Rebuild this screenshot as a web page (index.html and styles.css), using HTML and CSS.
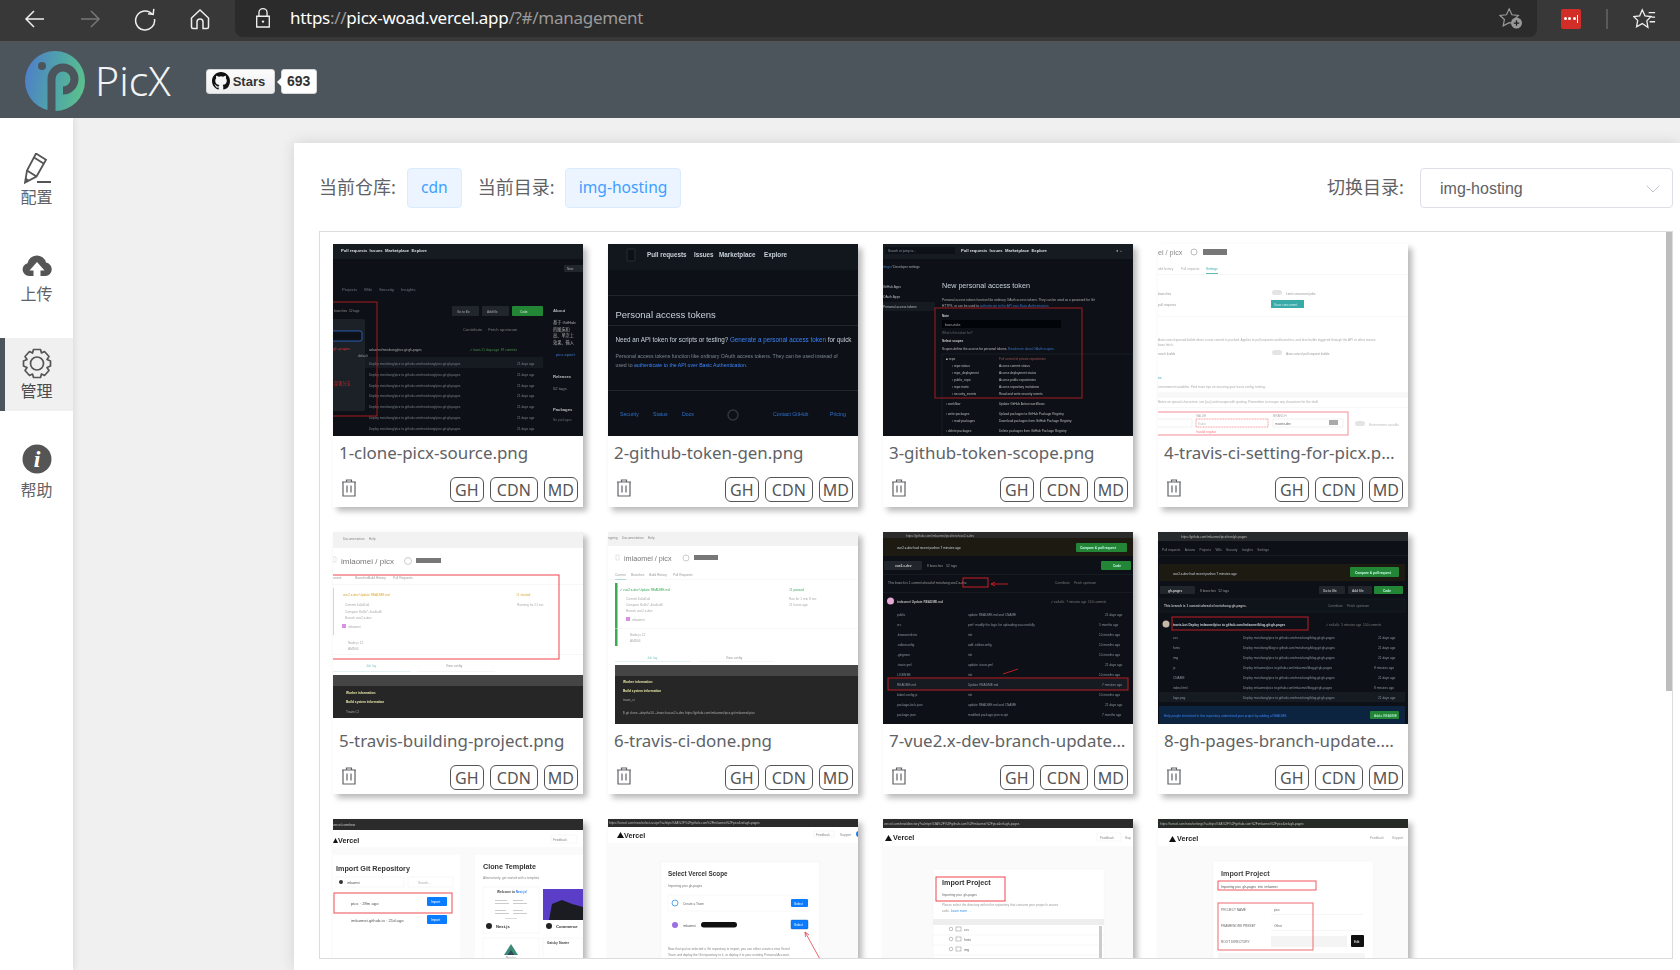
FILE: index.html
```html
<!DOCTYPE html>
<html lang="zh">
<head>
<meta charset="utf-8">
<title>PicX</title>
<link rel="stylesheet" href="styles.css">
</head>
<body>
<div class="browser">
  <div class="nav-icons">
    <svg class="bi" viewBox="0 0 24 24"><path d="M21 12H3.500M11 4l-8 8 8 8" fill="none" stroke="#eee" stroke-width="1.500"/></svg>
    <svg class="bi" viewBox="0 0 24 24"><path d="M3 12h17.500M13 4l8 8-8 8" fill="none" stroke="#777" stroke-width="1.500"/></svg>
    <svg class="bi" viewBox="0 0 24 24"><path d="M19.500 7.500A9.500 9.500 0 1 0 21.500 12M15 6.800l5.200.6.6-5.600" fill="none" stroke="#eee" stroke-width="1.500"/></svg>
    <svg class="bi" viewBox="0 0 24 24"><path d="M3.500 11L12 3l8.500 8v9a1.500 1.500 0 0 1-1.500 1.500h-4V15a3 3 0 0 0-6 0v6.500H5A1.500 1.500 0 0 1 3.500 20z" fill="none" stroke="#eee" stroke-width="1.500"/></svg>
  </div>
  <div class="address">
    <svg class="lock" viewBox="0 0 20 24"><path d="M5.500 10V6a4.500 4.500 0 0 1 9 0v4M3 10h14v12H3z" fill="none" stroke="#eee" stroke-width="1.500"/><circle cx="10" cy="16" r="1.300" fill="#eee"/></svg>
    <span class="url"><span class="hi">https</span>://<span class="hi">picx-woad.vercel.app</span>/?#/management</span>
    <svg class="star-add" viewBox="0 0 26 24"><path d="M11 2l3 6.500 7 .8-5 4.800 1 4-6-1-6.500 3.500 1.300-7L1 9.300l7-.8z" fill="none" stroke="#999" stroke-width="1.300"/><circle cx="19" cy="17.500" r="6" fill="#999"/><path d="M19 14.500v6M16 17.500h6" stroke="#222" stroke-width="1.400"/></svg>
  </div>
  <div class="ext">
    <div class="lastpass"><i></i><i></i><i></i><b></b></div>
    <div class="divider"></div>
    <svg class="fav" viewBox="0 0 26 24"><path d="M10 2l3 6.500 6.500.8-4.500 4.800 1.200 7L10 17l-6.200 3.500 1.200-7L.7 9.300l6.500-.8zM17 5h7M20 10h4M18 15h6" fill="none" stroke="#eee" stroke-width="1.400"/></svg>
  </div>
</div>

<header class="topbar">
  <svg class="logo" viewBox="0 0 60 60">
    <defs><linearGradient id="lg" x1="0" x2="1" y1="0.300" y2="0.500"><stop offset="0" stop-color="#4f7fc9"/><stop offset=".55" stop-color="#4fa5a8"/><stop offset="1" stop-color="#5bc08d"/></linearGradient></defs>
    <circle cx="30" cy="30" r="30" fill="url(#lg)"/>
    <circle cx="17" cy="15" r="4" fill="#4c545c"/>
    <path d="M26.500 60V28a11.500 11.500 0 1 1 11.500 11.500" fill="none" stroke="#4c545c" stroke-width="8"/>
  </svg>
  <span class="brand">PicX</span>
  <div class="gh-star">
    <svg class="octo" viewBox="0 0 16 16"><path fill="#111" d="M8 0C3.580 0 0 3.580 0 8c0 3.540 2.290 6.530 5.470 7.590.4.070.55-.17.55-.38v-1.340c-2.230.48-2.700-1.070-2.700-1.070-.36-.92-.89-1.170-.89-1.170-.73-.5.060-.49.060-.49.800.060 1.230.83 1.230.83.720 1.220 1.870.870 2.330.660.070-.520.280-.870.510-1.070-1.780-.2-3.640-.89-3.640-3.950 0-.870.31-1.590.820-2.150-.080-.2-.360-1.020.080-2.120 0 0 .670-.210 2.200.820a7.600 7.600 0 0 1 4 0c1.530-1.040 2.200-.820 2.200-.820.440 1.100.160 1.920.080 2.120.510.560.820 1.270.820 2.150 0 3.070-1.870 3.750-3.650 3.950.290.250.540.730.540 1.480v2.200c0 .210.150.460.550.380A8 8 0 0 0 16 8c0-4.420-3.580-8-8-8z"/></svg>
    <span>Stars</span>
  </div>
  <div class="gh-count">693</div>
</header>

<div class="main">
  <nav class="sidebar">
    <div class="side-item">
      <svg class="side-icon" viewBox="0 1.500 32 32"><path d="M15 2l10 6.300L15.500 25 4 31l2-12zM13 6l10 6.300M6 19l9.500 6M16 30.500h14" fill="none" stroke="#555" stroke-width="1.800"/><path d="M4 31l.6-5 3.600 2.600z" fill="#555"/></svg>
      <span>配置</span>
    </div>
    <div class="side-item">
      <svg class="side-icon" viewBox="0 0 32 32"><path d="M8 26a6.500 6.500 0 0 1-1.500-12.800A9.500 9.500 0 0 1 25 12.500 6.800 6.800 0 0 1 24.500 26h-5v-5.500h4L16 12l-7.500 8.500h4V26z" fill="#555"/></svg>
      <span>上传</span>
    </div>
    <div class="side-item active">
      <svg class="side-icon" viewBox="0 0 32 32"><path d="M12.500 2.500h7l1 3.500 3-1.500 4.500 5-2 3 3.500 1.500v5L26 20.500l2 3-4.500 5-3-1.500-1 3.500h-7l-1-3.500-3 1.500-4.500-5 2-3L2.500 19v-5l3.500-1.500-2-3 4.500-5 3 1.500z" fill="none" stroke="#555" stroke-width="1.700" stroke-linejoin="round"/><circle cx="16" cy="16.500" r="6.500" fill="none" stroke="#555" stroke-width="1.700"/></svg>
      <span>管理</span>
    </div>
    <div class="side-item help">
      <svg class="side-icon" viewBox="0 0 32 32"><circle cx="16" cy="16" r="14.500" fill="#555"/><text x="16" y="24" class="info-i" text-anchor="middle">i</text></svg>
      <span>帮助</span>
    </div>
  </nav>

  <div class="content">
    <section class="panel">
      <div class="info-row">
        <span class="lbl">当前仓库:</span>
        <span class="tag">cdn</span>
        <span class="lbl second">当前目录:</span>
        <span class="tag">img-hosting</span>
        <span class="lbl switch">切换目录:</span>
        <div class="select">
          <span>img-hosting</span>
          <svg class="chev" viewBox="0 0 14 8"><path d="M.7.7L7 7 13.300.7" fill="none" stroke="#c0c4cc" stroke-width="1"/></svg>
        </div>
      </div>

      <div class="list">
        <div class="scroll-thumb"></div>
        <div class="grid">

          <article class="card">
            <svg class="thumb" viewBox="0 0 250 192">
              <rect width="250" height="192" fill="#0d1117"/><rect width="250" height="15" fill="#161b22"/>
              <text x="8" y="7.500" class="f4 b" fill="#ddd">Pull requests  Issues  Marketplace  Explore</text>
              <rect x="231" y="21" width="19" height="7" rx="1" fill="#21262d"/><text x="234" y="26" class="f3" fill="#aaa">New</text>
              <text x="9" y="47" class="f4" fill="#6e7681">Projects      Wiki      Security      Insights</text>
              <rect x="119" y="62" width="27" height="10" rx="1" fill="#21262d"/><text x="124" y="69" class="f3" fill="#aaa">Go to file</text>
              <rect x="149" y="62" width="27" height="10" rx="1" fill="#21262d"/><text x="154" y="69" class="f3" fill="#aaa">Add file</text>
              <rect x="179" y="62" width="31" height="10" rx="1" fill="#238636"/><text x="187" y="69" class="f3" fill="#ddd">Code</text>
              <text x="220" y="68" class="f4 b" fill="#bbb">About</text>
              <text x="220" y="80" class="f4" fill="#aaa">基于 GitHub</text><text x="220" y="87" class="f4" fill="#aaa">的图床和</text><text x="220" y="93" class="f4" fill="#aaa">高、单次上</text><text x="220" y="100" class="f4" fill="#aaa">效果、输入</text>
              <text x="223" y="112" class="f4" fill="#3b74c8">picx.xpoet</text>
              <text x="220" y="134" class="f4 b" fill="#bbb">Releases</text><text x="220" y="146" class="f4" fill="#888">52 tags</text><text x="220" y="167" class="f4 b" fill="#bbb">Packages</text><text x="220" y="177" class="f3" fill="#666">No packages</text>
              <text x="130" y="87" class="f4" fill="#777">Contribute     Fetch upstream</text>
              <text x="36" y="107" class="f3" fill="#aaa">xalaomei/meiuhong/picx.git:gh-pages</text><text x="137" y="107" class="f3" fill="#4a8f4a">✓ travis 21 days ago  87 commits</text>
              <rect x="0" y="113" width="210" height="11" fill="#161b22"/>
              <g class="f3" fill="#7a8088">
                <text x="36" y="121">Deploy meiuhong/picx to github.com/meiuhong/picx.git:gh-pages</text><text x="184" y="121">21 days ago</text>
                <text x="36" y="132">Deploy meiuhong/picx to github.com/meiuhong/picx.git:gh-pages</text><text x="184" y="132">21 days ago</text>
                <text x="36" y="143">Deploy meiuhong/picx to github.com/meiuhong/picx.git:gh-pages</text><text x="184" y="143">21 days ago</text>
                <text x="36" y="153">Deploy meiuhong/picx to github.com/meiuhong/picx.git:gh-pages</text><text x="184" y="153">21 days ago</text>
                <text x="36" y="164">Deploy meiuhong/picx to github.com/meiuhong/picx.git:gh-pages</text><text x="184" y="164">21 days ago</text>
                <text x="36" y="175">Deploy meiuhong/picx to github.com/meiuhong/picx.git:gh-pages</text><text x="184" y="175">21 days ago</text>
                <text x="36" y="186">Deploy meiuhong/picx to github.com/meiuhong/picx.git:gh-pages</text><text x="184" y="186">21 days ago</text>
              </g>
              <rect x="-2" y="75" width="34" height="92" rx="2" fill="#1c2128"/>
              <rect x="-2" y="87" width="31" height="10" rx="2" fill="#0d1117" stroke="#2f6fd0" stroke-width=".8"/>
              <text x="0" y="106" class="f4" fill="#d03030">gh-pages</text><text x="1" y="141" class="f4" fill="#c02020">部署分支</text><text x="25" y="113" class="f3" fill="#999">default</text>
              <rect x="-2" y="58" width="46" height="114" fill="none" stroke="#a41c20" stroke-width="1"/>
              <text x="1" y="68" class="f3" fill="#888">branches  52 tags</text>
            </svg>
            <div class="name">1-clone-picx-source.png</div>
            <div class="actions">
              <svg class="trash" viewBox="0 0 16 18"><path d="M1 3h14M5.500 3V1h5v2M2 3v14h12V3M6 6.500v7M10 6.500v7" fill="none" stroke="#606266" stroke-width="1.200"/></svg>
              <div class="btns"><span class="btn">GH</span><span class="btn">CDN</span><span class="btn">MD</span></div>
            </div>
          </article>

          <article class="card">
            <svg class="thumb" viewBox="0 0 250 192">
              <rect width="250" height="192" fill="#0d1117"/><rect width="250" height="26" fill="#12161d"/>
              <rect x="19" y="5" width="8" height="12" rx="1" fill="#0d1117" stroke="#30363d" stroke-width=".7"/>
              <text x="39" y="13" class="f6 b" fill="#c9d1d9">Pull requests</text><text x="86" y="13" class="f6 b" fill="#c9d1d9">Issues</text><text x="111" y="13" class="f6 b" fill="#c9d1d9">Marketplace</text><text x="156" y="13" class="f6 b" fill="#c9d1d9">Explore</text>
              <rect y="51" width="250" height=".6" fill="#30363d"/>
              <text x="7.500" y="74" class="f9" fill="#c9d1d9">Personal access tokens</text>
              <rect y="81" width="250" height=".6" fill="#30363d"/>
              <text x="7.500" y="97.500" class="f6" fill="#c9d1d9">Need an API token for scripts or testing? <tspan fill="#3b82f6">Generate a personal access token</tspan> for quick</text>
              <text x="7.500" y="114" class="f5" fill="#7d8590">Personal access tokens function like ordinary OAuth access tokens. They can be used instead of</text>
              <text x="7.500" y="122.500" class="f5" fill="#7d8590">used to <tspan fill="#3b82f6">authenticate to the API over Basic Authentication.</tspan></text>
              <rect y="146" width="250" height=".6" fill="#30363d"/>
              <g class="f5" fill="#2f6fc8"><text x="12" y="172">Security</text><text x="45" y="172">Status</text><text x="74" y="172">Docs</text><text x="165" y="172">Contact GitHub</text><text x="222" y="172">Pricing</text></g>
              <circle cx="125" cy="171" r="5" fill="none" stroke="#30363d" stroke-width="1.500"/>
            </svg>
            <div class="name">2-github-token-gen.png</div>
            <div class="actions">
              <svg class="trash" viewBox="0 0 16 18"><path d="M1 3h14M5.500 3V1h5v2M2 3v14h12V3M6 6.500v7M10 6.500v7" fill="none" stroke="#606266" stroke-width="1.200"/></svg>
              <div class="btns"><span class="btn">GH</span><span class="btn">CDN</span><span class="btn">MD</span></div>
            </div>
          </article>

          <article class="card">
            <svg class="thumb" viewBox="0 0 250 192">
              <rect width="250" height="192" fill="#0d1117"/><rect width="250" height="15" fill="#161b22"/>
              <rect x="2" y="3" width="70" height="7" fill="#0d1117"/><text x="5" y="8" class="f3" fill="#8b949e">Search or jump to...</text>
              <text x="78" y="8" class="f4 b" fill="#ddd">Pull requests  Issues  Marketplace  Explore</text>
              <text x="233" y="8" class="f4" fill="#999">● +</text>
              <text x="0" y="24" class="f3" fill="#aaa"><tspan fill="#3b74c8">ttings</tspan> / Developer settings</text>
              <rect y="58" width="52" height="9" fill="#161b22"/>
              <g class="f3" fill="#b8bdc4"><text x="0" y="44">GitHub Apps</text><text x="0" y="54">OAuth Apps</text><text x="0" y="64">Personal access tokens</text></g>
              <text x="59" y="44" class="f7" fill="#c9d1d9">New personal access token</text>
              <text x="59" y="57" class="f3" fill="#aaa">Personal access tokens function like ordinary OAuth access tokens. They can be used as a password for Git</text>
              <text x="59" y="63" class="f3" fill="#aaa">HTTPS, or can be used to <tspan fill="#3b74c8">authenticate to the API over Basic Authentication</tspan></text>
              <text x="59" y="73" class="f3 b" fill="#ccc">Note</text>
              <rect x="59" y="76" width="119" height="8" fill="#010409"/><text x="62" y="82" class="f3" fill="#aaa">base-vtoks</text>
              <text x="59" y="90" class="f3" fill="#666">What's this token for?</text>
              <text x="59" y="98" class="f3 b" fill="#ccc">Select scopes</text>
              <text x="59" y="106" class="f3" fill="#bbb">Scopes define the access for personal tokens. <tspan fill="#3b74c8">Read more about OAuth scopes.</tspan></text>
              <rect x="59" y="110" width="191" height="82" fill="none" stroke="#21262d" stroke-width=".6"/>
              <g class="f3" fill="#bbb">
                <text x="63" y="116">■ repo</text><text x="116" y="116" fill="#a05050">Full control of private repositories</text>
                <text x="69" y="123">▫ repo:status</text><text x="116" y="123">Access commit status</text>
                <text x="69" y="130">▫ repo_deployment</text><text x="116" y="130">Access deployment status</text>
                <text x="69" y="137">▫ public_repo</text><text x="116" y="137">Access public repositories</text>
                <text x="69" y="144">▫ repo:invite</text><text x="116" y="144">Access repository invitations</text>
                <text x="69" y="151">▫ security_events</text><text x="116" y="151">Read and write security events</text>
                <text x="63" y="161">▫ workflow</text><text x="116" y="161">Update GitHub Action workflows</text>
                <text x="63" y="171">▫ write:packages</text><text x="116" y="171">Upload packages to GitHub Package Registry</text>
                <text x="69" y="178">▫ read:packages</text><text x="116" y="178">Download packages from GitHub Package Registry</text>
                <text x="63" y="188">▫ delete:packages</text><text x="116" y="188">Delete packages from GitHub Package Registry</text>
              </g>
              <rect x="52" y="64" width="147" height="90" fill="none" stroke="#a01c22" stroke-width="1"/>
            </svg>
            <div class="name">3-github-token-scope.png</div>
            <div class="actions">
              <svg class="trash" viewBox="0 0 16 18"><path d="M1 3h14M5.500 3V1h5v2M2 3v14h12V3M6 6.500v7M10 6.500v7" fill="none" stroke="#606266" stroke-width="1.200"/></svg>
              <div class="btns"><span class="btn">GH</span><span class="btn">CDN</span><span class="btn">MD</span></div>
            </div>
          </article>

          <article class="card">
            <svg class="thumb" viewBox="0 0 250 192">
              <rect width="250" height="192" fill="#fff"/>
              <text x="0" y="11" class="f7" fill="#888">ei / picx</text><circle cx="36" cy="8" r="3" fill="none" stroke="#bbb"/><rect x="45" y="5" width="24" height="6" fill="#777"/>
              <g class="f3" fill="#aaa"><text x="0" y="26">uild history</text><text x="23" y="26">Pull requests</text></g><text x="48" y="26" class="f3" fill="#39aaa8">Settings</text>
              <rect x="48" y="29" width="12" height=".8" fill="#39aaa8"/><rect y="30" width="250" height=".5" fill="#eee"/>
              <text x="0" y="51" class="f3" fill="#999">branches</text><rect x="114" y="46" width="10" height="5" rx="2.500" fill="#e4e4e4"/><text x="128" y="51" class="f3" fill="#999">Limit concurrent jobs</text>
              <text x="0" y="62" class="f3" fill="#999">pull requests</text><rect x="113" y="56" width="33" height="8" fill="#39aaa8"/><text x="116" y="62" class="f3" fill="#cfeeee">Save concurrent</text>
              <rect y="72" width="250" height=".5" fill="#eee"/>
              <text x="0" y="97" class="f3" fill="#aaa">Auto cancel queued builds when a new commit is pushed. Applies to pull requests and branches, and also builds triggered through the API or other means.</text><text x="0" y="102" class="f3" fill="#aaa">base fetch.</text>
              <text x="0" y="111" class="f3" fill="#999">ranch builds</text><rect x="114" y="106" width="10" height="5" rx="2.500" fill="#e4e4e4"/><text x="128" y="111" class="f3" fill="#999">Auto cancel pull request builds</text>
              <text x="0" y="135" class="f3" fill="#39aaa8">es</text>
              <text x="0" y="144" class="f3" fill="#aaa">environment variables. Find more tips on securing your travis config, testing.</text>
              <rect y="148" width="250" height="6" fill="#f8f8f8"/>
              <text x="0" y="159" class="f3" fill="#aaa">Notes on special characters: use [a-z] and escape with quoting. Remember to escape any characters for the shell.</text>
              <rect y="163" width="250" height=".5" fill="#eee"/>
              <rect x="-3" y="168" width="193" height="23" fill="#fff" stroke="#f5a0a8" stroke-width="1.200"/>
              <text x="38" y="173" class="f3" fill="#aaa">VALUE</text><text x="115" y="173" class="f3" fill="#aaa">BRANCH</text>
              <rect x="-2" y="175" width="36" height="8" fill="#fff" stroke="#ddd" stroke-width=".4"/>
              <rect x="38" y="175" width="72" height="8" fill="#fff" stroke="#f37a85" stroke-width=".8" stroke-dasharray="1 .6"/><text x="40" y="181" class="f3" fill="#bbb">Value</text>
              <rect x="115" y="175" width="70" height="8" fill="#fff" stroke="#ddd" stroke-width=".4"/><text x="117" y="181" class="f3" fill="#666">master-dev</text><rect x="171" y="176" width="9" height="5" fill="#aaa"/>
              <text x="38" y="189" class="f3" fill="#f37a85">Invalid regular</text>
              <rect x="197" y="177" width="10" height="5" rx="2.500" fill="#e4e4e4"/><text x="211" y="182" class="f3" fill="#bbb">Environment variable</text>
            </svg>
            <div class="name">4-travis-ci-setting-for-picx.png.png</div>
            <div class="actions">
              <svg class="trash" viewBox="0 0 16 18"><path d="M1 3h14M5.500 3V1h5v2M2 3v14h12V3M6 6.500v7M10 6.500v7" fill="none" stroke="#606266" stroke-width="1.200"/></svg>
              <div class="btns"><span class="btn">GH</span><span class="btn">CDN</span><span class="btn">MD</span></div>
            </div>
          </article>

          <article class="card">
            <svg class="thumb" viewBox="0 0 250 192">
              <rect width="250" height="192" fill="#fff"/><rect width="250" height="16" fill="#f2f2f2"/>
              <text x="10" y="8" class="f3" fill="#888">Documentation     Help</text>
              <rect x="0" y="25" width="3" height="5" fill="none" stroke="#ccc" stroke-width=".5"/>
              <text x="8" y="32" class="f8" fill="#777">imlaomei / picx</text><circle cx="75" cy="29" r="3.500" fill="none" stroke="#ccc"/><rect x="83" y="26" width="25" height="5" fill="#777"/>
              <g class="f3" fill="#999"><text x="0" y="47">urrent</text><text x="22" y="47">Branches</text><text x="35" y="47">Build History</text><text x="60" y="47">Pull Requests</text></g>
              <rect y="52" width="250" height=".5" fill="#eee"/>
              <rect y="56" width="1" height="47" fill="#f1dc62"/>
              <text x="10" y="64" class="f3" fill="#d9a830">vue2.x-dev Update README.md</text><text x="183" y="64" class="f3" fill="#d9a830">#1 started</text>
              <g class="f3" fill="#aaa"><text x="12" y="74">Commit 6a5d1a6</text><text x="12" y="81">Compare 8c4b7..4ea6cd6</text><text x="12" y="87">Branch vue2.x-dev</text><text x="184" y="74">Running for 21 sec</text><text x="15" y="96">imlaomei</text><text x="15" y="112">Node.js 12</text><text x="15" y="118">AMD64</text></g>
              <rect x="9" y="92" width="4" height="4" fill="#d890e0"/>
              <rect y="122" width="250" height=".5" fill="#eee"/>
              <text x="33" y="135" class="f3" fill="#8cc">Job log</text><text x="113" y="135" class="f3" fill="#999">View config</text>
              <rect y="139" width="78" height=".6" fill="#cfe8e8"/><rect x="84" y="139" width="78" height=".6" fill="#eee"/>
              <rect y="143" width="250" height="11" fill="#454545"/><rect y="154" width="250" height="32" fill="#262626"/>
              <text x="13" y="162" class="f3 b" fill="#e8e8a8">Worker information</text><text x="13" y="171" class="f3 b" fill="#e8e8a8">Build system information</text><text x="13" y="181" class="f3" fill="#aaa">Travis CI</text>
              <rect x="-2" y="43" width="228" height="84" fill="none" stroke="#f0444f" stroke-width="1"/>
            </svg>
            <div class="name">5-travis-building-project.png</div>
            <div class="actions">
              <svg class="trash" viewBox="0 0 16 18"><path d="M1 3h14M5.500 3V1h5v2M2 3v14h12V3M6 6.500v7M10 6.500v7" fill="none" stroke="#606266" stroke-width="1.200"/></svg>
              <div class="btns"><span class="btn">GH</span><span class="btn">CDN</span><span class="btn">MD</span></div>
            </div>
          </article>

          <article class="card">
            <svg class="thumb" viewBox="0 0 250 192">
              <rect width="250" height="192" fill="#fff"/><rect width="250" height="14" fill="#f2f2f2"/>
              <text x="0" y="7" class="f3" fill="#888">ngoing     Documentation     Help</text>
              <rect x="8" y="23" width="3" height="5" fill="none" stroke="#ccc" stroke-width=".5"/>
              <text x="16" y="29" class="f7" fill="#777">imlaomei / picx</text><circle cx="78" cy="26" r="3" fill="none" stroke="#ccc"/><rect x="86" y="23" width="24" height="5" fill="#777"/>
              <g class="f3" fill="#999"><text x="7" y="44">Current</text><text x="23" y="44">Branches</text><text x="41" y="44">Build History</text><text x="65" y="44">Pull Requests</text></g>
              <rect x="7" y="47" width="11" height=".6" fill="#39aaa8"/><rect y="47" width="250" height=".4" fill="#eee"/>
              <rect x="7" y="51" width="2.500" height="63" fill="#39aa56"/>
              <text x="12" y="59" class="f3" fill="#39aa56">✓ vue2.x-dev Update README.md</text><text x="181" y="59" class="f3" fill="#39aa56">#1 passed</text>
              <g class="f3" fill="#aaa"><text x="18" y="68">Commit 6a5d1a6</text><text x="18" y="74">Compare 8c4b7..4ea6cd6</text><text x="18" y="80">Branch vue2.x-dev</text><text x="181" y="68">Ran for 1 min 8 sec</text><text x="181" y="74">21 hours ago</text><text x="24" y="89">imlaomei</text><text x="22" y="104">Node.js 12</text><text x="22" y="110">AMD64</text></g>
              <rect x="18" y="85" width="4" height="4" fill="#d890e0"/>
              <rect x="7" y="96" width="243" height=".5" fill="#eee"/>
              <text x="39" y="127" class="f3" fill="#8cc">Job log</text><text x="118" y="127" class="f3" fill="#999">View config</text>
              <rect x="7" y="129" width="76" height=".6" fill="#cfe8e8"/><rect x="90" y="129" width="76" height=".6" fill="#eee"/>
              <rect x="7" y="133" width="243" height="11" fill="#454545"/><rect x="7" y="144" width="243" height="48" fill="#262626"/>
              <text x="15" y="151" class="f3 b" fill="#e8e8a8">Worker information</text><text x="15" y="160" class="f3 b" fill="#e8e8a8">Build system information</text><text x="15" y="169" class="f3" fill="#aaa">travis_ci</text>
              <text x="15" y="182" class="f3" fill="#aaa">$ git clone --depth=50 --branch=vue2.x-dev https://github.com/imlaomei/picx.git imlaomei/picx</text>
            </svg>
            <div class="name">6-travis-ci-done.png</div>
            <div class="actions">
              <svg class="trash" viewBox="0 0 16 18"><path d="M1 3h14M5.500 3V1h5v2M2 3v14h12V3M6 6.500v7M10 6.500v7" fill="none" stroke="#606266" stroke-width="1.200"/></svg>
              <div class="btns"><span class="btn">GH</span><span class="btn">CDN</span><span class="btn">MD</span></div>
            </div>
          </article>

          <article class="card">
            <svg class="thumb" viewBox="0 0 250 192">
              <rect width="250" height="192" fill="#0d1117"/><rect width="250" height="6" fill="#2b2b2b"/>
              <text x="23" y="4.500" class="f3" fill="#aaa">https://github.com/imlaomei/picx/tree/vue2.x-dev</text>
              <rect y="6" width="250" height="18" fill="#1d1a12"/>
              <text x="14" y="17" class="f3" fill="#c9d1d9">vue2.x-dev had recent pushes 7 minutes ago</text>
              <rect x="193" y="11" width="51" height="9" rx="1" fill="#238636"/><text x="197" y="17" class="f3 b" fill="#cfe">Compare &amp; pull request</text>
              <rect x="1" y="29" width="38" height="9" rx="1" fill="#21262d"/><text x="12" y="35" class="f3 b" fill="#ccc">vue2.x-dev</text>
              <text x="44" y="35" class="f3" fill="#999">8 branches    52 tags</text>
              <rect x="218" y="29" width="30" height="9" rx="1" fill="#238636"/><text x="230" y="35" class="f3 b" fill="#cfe">Code</text>
              <rect y="42" width="250" height=".5" fill="#21262d"/>
              <text x="5" y="52" class="f3" fill="#999">This branch is 1 commit ahead of meiuhong:vue2.x-dev.</text>
              <rect x="80" y="46" width="25" height="9" fill="none" stroke="#d01c24" stroke-width="1"/>
              <path d="M125 52h-17M112 50l-4 2 4 2" fill="none" stroke="#d01c24" stroke-width=".9"/>
              <text x="172" y="52" class="f3" fill="#777">Contribute     Fetch upstream</text>
              <rect y="60" width="250" height=".5" fill="#21262d"/>
              <circle cx="7.500" cy="69" r="3.500" fill="#e8a8d8"/><text x="14" y="71" class="f3 b" fill="#bbb">imlaomei Update README.md</text><text x="168" y="71" class="f3" fill="#777">✓ ee4a6c  7 minutes ago  140 commits</text>
              <rect x="5" y="147" width="240" height="11" fill="#161b22"/>
              <g class="f3" fill="#8b949e">
                <text x="14" y="84">public</text><text x="85" y="84">update README.md and CNAME</text><text x="222" y="84">21 days ago</text>
                <text x="14" y="94">src</text><text x="85" y="94">perf: modify the logic for uploading successfully</text><text x="216" y="94">5 months ago</text>
                <text x="14" y="104">.browserslistrc</text><text x="85" y="104">init</text><text x="216" y="104">10 months ago</text>
                <text x="14" y="114">.editorconfig</text><text x="85" y="114">add .editorconfig</text><text x="216" y="114">10 months ago</text>
                <text x="14" y="124">.gitignore</text><text x="85" y="124">init</text><text x="216" y="124">10 months ago</text>
                <text x="14" y="134">.travis.yml</text><text x="85" y="134">update .travis.yml</text><text x="222" y="134">21 days ago</text>
                <text x="14" y="144">LICENSE</text><text x="85" y="144">init</text><text x="216" y="144">10 months ago</text>
                <text x="14" y="154">README.md</text><text x="85" y="154">Update README.md</text><text x="219" y="154">7 minutes ago</text>
                <text x="14" y="164">babel.config.js</text><text x="85" y="164">init</text><text x="216" y="164">10 months ago</text>
                <text x="14" y="174">package-lock.json</text><text x="85" y="174">update README.md and CNAME</text><text x="222" y="174">21 days ago</text>
                <text x="14" y="184">package.json</text><text x="85" y="184">modified package.json script</text><text x="219" y="184">7 months ago</text>
              </g>
              <rect x="5" y="146" width="240" height="12" fill="none" stroke="#c01c24" stroke-width="1"/>
              <path d="M135 137l-15 5" fill="none" stroke="#d01c24" stroke-width=".9"/>
            </svg>
            <div class="name">7-vue2.x-dev-branch-update.png</div>
            <div class="actions">
              <svg class="trash" viewBox="0 0 16 18"><path d="M1 3h14M5.500 3V1h5v2M2 3v14h12V3M6 6.500v7M10 6.500v7" fill="none" stroke="#606266" stroke-width="1.200"/></svg>
              <div class="btns"><span class="btn">GH</span><span class="btn">CDN</span><span class="btn">MD</span></div>
            </div>
          </article>

          <article class="card">
            <svg class="thumb" viewBox="0 0 250 192">
              <rect width="250" height="192" fill="#0d1117"/><rect width="250" height="9" fill="#262a2c"/>
              <text x="23" y="6" class="f3" fill="#bbb">https://github.com/imlaomei/picx/tree/gh-pages</text>
              <text x="4" y="19" class="f3" fill="#888">Pull requests     Actions     Projects     Wiki     Security     Insights     Settings</text>
              <rect y="23" width="250" height=".5" fill="#21262d"/>
              <rect x="1" y="32" width="246" height="17" rx="1" fill="#1d1a12"/>
              <text x="15" y="43" class="f3" fill="#c9d1d9">vue2.x-dev had recent pushes 7 minutes ago</text>
              <rect x="192" y="35" width="49" height="10" rx="1" fill="#238636"/><text x="197" y="42" class="f3 b" fill="#cfe">Compare &amp; pull request</text>
              <rect x="2" y="54" width="35" height="8" rx="1" fill="#21262d"/><text x="10" y="60" class="f3 b" fill="#ccc">gh-pages</text>
              <text x="42" y="60" class="f3" fill="#999">8 branches   52 tags</text>
              <rect x="161" y="54" width="26" height="8" rx="1" fill="#21262d"/><text x="165" y="60" class="f3 b" fill="#bbb">Go to file</text>
              <rect x="190" y="54" width="24" height="8" rx="1" fill="#21262d"/><text x="194" y="60" class="f3 b" fill="#bbb">Add file</text>
              <rect x="216" y="54" width="29" height="8" rx="1" fill="#238636"/><text x="225" y="60" class="f3 b" fill="#cfe">Code</text>
              <rect x="1" y="67" width="246" height="13" fill="#0f141b" stroke="#21262d" stroke-width=".4"/>
              <text x="6" y="75" class="f3 b" fill="#bbb">This branch is 1 commit ahead of meiuhong:gh-pages.</text>
              <text x="170" y="75" class="f3" fill="#777">Contribute     Fetch upstream</text>
              <circle cx="8" cy="92" r="3.500" fill="#c8b8a8"/>
              <text x="15" y="94" class="f3 b" fill="#c9d1d9">travis-bot Deploy imlaomei/picx to github.com/imlaomei/blog.git:gh-pages</text>
              <text x="168" y="94" class="f3" fill="#777">✓ ee4a6c  5 minutes ago  100 commits</text>
              <rect x="14" y="85" width="136" height="13" fill="none" stroke="#c01c24" stroke-width="1"/>
              <rect x="1" y="160" width="246" height="10" fill="#161b22"/>
              <g class="f3" fill="#8b949e">
                <text x="15" y="107">css</text><text x="85" y="107">Deploy meiuhong/picx to github.com/meiuhong/blog.git:gh-pages</text><text x="220" y="107">21 days ago</text>
                <text x="15" y="117">fonts</text><text x="85" y="117">Deploy meiuhong/blog to github.com/meiuhong/blog.git:gh-pages</text><text x="220" y="117">21 days ago</text>
                <text x="15" y="127">img</text><text x="85" y="127">Deploy meiuhong/picx to github.com/meiuhong/blog.git:gh-pages</text><text x="220" y="127">21 days ago</text>
                <text x="15" y="137">js</text><text x="85" y="137">Deploy imlaomei/picx to github.com/imlaomei/blog.git:gh-pages</text><text x="216" y="137">8 minutes ago</text>
                <text x="15" y="147">CNAME</text><text x="85" y="147">Deploy meiuhong/picx to github.com/meiuhong/blog.git:gh-pages</text><text x="220" y="147">21 days ago</text>
                <text x="15" y="157">index.html</text><text x="85" y="157">Deploy imlaomei/picx to github.com/imlaomei/blog.git:gh-pages</text><text x="216" y="157">8 minutes ago</text>
                <text x="15" y="167">logo.png</text><text x="85" y="167">Deploy meiuhong/picx to github.com/meiuhong/blog.git:gh-pages</text><text x="220" y="167">21 days ago</text>
              </g>
              <rect x="1" y="174" width="246" height="18" rx="1" fill="#0c2440"/>
              <text x="6" y="185" class="f3" fill="#3b82f6">Help people interested in this repository understand your project by adding a README.</text>
              <rect x="212" y="179" width="29" height="8" rx="1" fill="#238636"/><text x="216" y="185" class="f3" fill="#cfe">Add a README</text>
            </svg>
            <div class="name">8-gh-pages-branch-update.png</div>
            <div class="actions">
              <svg class="trash" viewBox="0 0 16 18"><path d="M1 3h14M5.500 3V1h5v2M2 3v14h12V3M6 6.500v7M10 6.500v7" fill="none" stroke="#606266" stroke-width="1.200"/></svg>
              <div class="btns"><span class="btn">GH</span><span class="btn">CDN</span><span class="btn">MD</span></div>
            </div>
          </article>

          <article class="card">
            <svg class="thumb" viewBox="0 0 250 192">
              <rect width="250" height="192" fill="#fff"/><rect y="28" width="250" height="164" fill="#fafafa"/><rect width="250" height="11" fill="#2b2b2b"/>
              <text x="0" y="7" class="f3" fill="#ccc">vercel.com/new</text>
              <path d="M0 24l2.500-5 2.500 5z" fill="#111"/><text x="5" y="24" class="f7 b" fill="#222">Vercel</text>
              <rect x="218" y="16" width="26" height="8" fill="#fff" stroke="#eee" stroke-width=".5"/><text x="220" y="22" class="f3" fill="#888">Feedback</text>
              <rect x="-2" y="36" width="129" height="156" fill="#fff"/><rect x="142" y="36" width="108" height="156" fill="#fff"/>
              <text x="3" y="52" class="f7 b" fill="#333">Import Git Repository</text>
              <rect x="3" y="58" width="68" height="10" fill="#fff" stroke="#eee" stroke-width=".5"/><circle cx="8" cy="63" r="2" fill="#333"/><text x="14" y="65" class="f3" fill="#555">imlaomei</text>
              <rect x="75" y="58" width="45" height="10" fill="#fff" stroke="#eee" stroke-width=".5"/><text x="85" y="65" class="f3" fill="#aaa">Search...</text>
              <rect x="1" y="74" width="118" height="20" fill="#fff" stroke="#f06a70" stroke-width="1.200"/>
              <text x="18" y="86" class="f4" fill="#555">picx · 28m ago</text><rect x="94" y="78" width="20" height="9" rx="1" fill="#0a7cff"/><text x="98" y="84" class="f3" fill="#fff">Import</text>
              <text x="18" y="103" class="f4" fill="#555">imlaomei.github.io · 21d ago</text><rect x="94" y="96" width="20" height="9" rx="1" fill="#0a7cff"/><text x="98" y="102" class="f3" fill="#fff">Import</text>
              <text x="150" y="50" class="f7 b" fill="#333">Clone Template</text><text x="150" y="60" class="f3" fill="#888">Alternatively, get started with a template</text>
              <rect x="150" y="68" width="56" height="46" fill="#fff" stroke="#f0f0f0" stroke-width=".5"/><text x="164" y="74" class="f3 b" fill="#444">Welcome to <tspan fill="#2f7ff0">Next.js!</tspan></text>
              <g fill="#ccc"><rect x="162" y="81" width="12" height="1"/><rect x="180" y="81" width="10" height="1"/><rect x="162" y="84" width="14" height="1"/><rect x="180" y="84" width="14" height="1"/><rect x="162" y="91" width="11" height="1"/><rect x="180" y="91" width="10" height="1"/><rect x="162" y="94" width="14" height="1"/><rect x="180" y="94" width="14" height="1"/><rect x="172" y="99" width="12" height=".7"/></g>
              <circle cx="156" cy="107" r="3" fill="#222"/><text x="163" y="109" class="f4 b" fill="#333">Next.js</text>
              <rect x="210" y="70" width="40" height="31" fill="#5b3ec8"/><path d="M216 101l3-16 10-4 10 4 11 3v13z" fill="#1a1c22"/>
              <rect x="210" y="101" width="40" height="14" fill="#fff"/><circle cx="216" cy="107" r="3" fill="#222"/><text x="223" y="109" class="f4 b" fill="#333">Commerce</text>
              <rect x="150" y="119" width="56" height="40" fill="#fff" stroke="#f0f0f0" stroke-width=".5"/><path d="M178 125l7 11h-14z" fill="#3b8a75"/><path d="M178 131l3.500 5h-7z" fill="#2f4a5c"/><text x="173" y="140" class="f3" fill="#888">Nuxt.js</text>
              <rect x="210" y="119" width="40" height="40" fill="#fff" stroke="#f0f0f0" stroke-width=".5"/><text x="214" y="125" class="f3 b" fill="#444">Gatsby Starter</text>
            </svg>
          </article>

          <article class="card">
            <svg class="thumb" viewBox="0 0 250 192">
              <rect width="250" height="192" fill="#fafafa"/><rect y="8" width="250" height="16" fill="#fff"/><rect width="250" height="8" fill="#2b2b2b"/>
              <text x="1" y="5" class="f3" fill="#bbb">https://vercel.com/new/select-scope?s=https%3A%2F%2Fgithub.com%2Fimlaomei%2Fpicx&amp;ref=gh-pages</text>
              <path d="M9 19l3.500-6 3.500 6z" fill="#111"/><text x="16" y="18.500" class="f7 b" fill="#222">Vercel</text>
              <rect x="206" y="12" width="20" height="6" fill="#fff" stroke="#eee" stroke-width=".5"/><text x="208" y="17" class="f3" fill="#888">Feedback</text><text x="232" y="17" class="f3" fill="#888">Support</text><circle cx="251" cy="15" r="3" fill="#0a7cff"/>
              <rect x="53" y="43" width="158" height="149" fill="#fff" stroke="#f4f4f4" stroke-width=".5"/>
              <text x="60" y="57" class="f6 b" fill="#333">Select Vercel Scope</text>
              <text x="60" y="68" class="f3" fill="#777">Importing picx gh-pages</text>
              <rect x="60" y="76" width="140" height="16" fill="#fff" stroke="#f2f2f2" stroke-width=".5"/><circle cx="67" cy="84" r="3" fill="none" stroke="#5aa8f0"/><text x="75" y="86" class="f3" fill="#666">Create a Team</text>
              <rect x="183" y="80" width="17" height="8" rx="1" fill="#0a7cff"/><text x="186" y="86" class="f3" fill="#fff">Select</text>
              <circle cx="67" cy="106" r="3" fill="#9a70e0"/><text x="75" y="108" class="f3" fill="#555">imlaomei</text><rect x="93" y="103" width="36" height="5.500" rx="2.700" fill="#111"/>
              <rect x="183" y="101" width="17" height="9" rx="1" fill="#0a7cff" stroke="#1050a0" stroke-width=".4"/><text x="186" y="107" class="f3" fill="#fff">Select</text>
              <text x="60" y="131" class="f3" fill="#888">Now that you've selected a Git repository to import, you can either create a new Vercel</text>
              <text x="60" y="137" class="f3" fill="#888">Team and deploy the Git repository to it, or deploy it to your existing Personal Account.</text>
              <path d="M197 113l16 29M197 113l.5 5M197 113l4 3" fill="none" stroke="#e0404a" stroke-width=".8"/>
            </svg>
          </article>

          <article class="card">
            <svg class="thumb" viewBox="0 0 250 192">
              <rect width="250" height="192" fill="#fafafa"/><rect y="9" width="250" height="18" fill="#fff"/><rect width="250" height="9" fill="#2b2b2b"/>
              <text x="1" y="6" class="f3" fill="#bbb">vercel.com/new/directory?s=https%3A%2F%2Fgithub.com%2Fimlaomei%2Fpicx&amp;ref=gh-pages</text>
              <path d="M2 22l3.500-6 3.500 6z" fill="#111"/><text x="10" y="20.500" class="f7 b" fill="#222">Vercel</text>
              <rect x="214" y="14" width="24" height="8" fill="#fff" stroke="#eee" stroke-width=".5"/><text x="217" y="19.500" class="f3" fill="#888">Feedback</text><text x="242" y="19.500" class="f3" fill="#888">Sup</text>
              <rect x="50" y="50" width="171" height="142" fill="#fff" stroke="#f4f4f4" stroke-width=".5"/>
              <text x="59" y="66" class="f7 b" fill="#333">Import Project</text>
              <text x="59" y="77" class="f3" fill="#666">Importing picx  gh-pages</text>
              <rect x="53" y="58" width="69" height="24" fill="none" stroke="#f0444f" stroke-width="1"/>
              <text x="59" y="87" class="f3" fill="#999">Please select the directory within this repository that contains your project's source</text>
              <text x="59" y="93" class="f3" fill="#999">code. <tspan fill="#2f8ff0">Learn more →</tspan></text>
              <rect x="50" y="100" width="171" height="6" fill="#eee"/>
              <g stroke="#eee" stroke-width=".5"><path d="M50 116h171M50 126h171M50 136h171"/></g>
              <g class="f3" fill="#666"><text x="81" y="112">css</text><text x="81" y="122">fonts</text><text x="81" y="132">img</text></g>
              <g fill="none" stroke="#999" stroke-width=".6"><circle cx="68" cy="110" r="1.800"/><circle cx="68" cy="120" r="1.800"/><circle cx="68" cy="130" r="1.800"/><rect x="73" y="108" width="5" height="4"/><rect x="73" y="118" width="5" height="4"/><rect x="73" y="128" width="5" height="4"/></g>
              <rect x="216" y="107" width="3" height="85" fill="#ccc"/>
            </svg>
          </article>

          <article class="card">
            <svg class="thumb" viewBox="0 0 250 192">
              <rect width="250" height="192" fill="#fafafa"/><rect y="9" width="250" height="18" fill="#fff"/><rect width="250" height="9" fill="#272b27"/>
              <text x="2" y="6" class="f3" fill="#bbb">https://vercel.com/new/settings?s=https%3A%2F%2Fgithub.com%2Fimlaomei%2Fpicx&amp;ref=gh-pages</text>
              <path d="M11 23l3.500-6 3.500 6z" fill="#111"/><text x="19" y="21.500" class="f7 b" fill="#222">Vercel</text>
              <text x="212" y="20" class="f3" fill="#999">Feedback</text><text x="234" y="20" class="f3" fill="#999">Support</text>
              <rect x="55" y="42" width="160" height="150" fill="#fff" stroke="#f4f4f4" stroke-width=".5"/>
              <text x="63" y="57" class="f7 b" fill="#444">Import Project</text>
              <text x="63" y="69" class="f3" fill="#555">Importing picx  gh-pages  into  imlaomei</text>
              <rect x="60" y="62" width="98" height="9" fill="none" stroke="#f0444f" stroke-width=".9"/>
              <g class="f3" fill="#666"><text x="63" y="92">PROJECT NAME</text><text x="63" y="108">FRAMEWORK PRESET</text><text x="63" y="124">ROOT DIRECTORY</text><text x="116" y="92">picx</text><text x="116" y="108">Other</text><text x="116" y="124">./</text></g>
              <rect x="113" y="95" width="92" height=".6" fill="#eee"/><rect x="113" y="111" width="92" height=".6" fill="#eee"/>
              <rect x="113" y="117" width="76" height="11" fill="#f4f4f4"/>
              <rect x="193" y="116" width="13" height="12" rx="1" fill="#111"/><text x="196" y="124" class="f3" fill="#fff">Edit</text>
              <rect x="60" y="84" width="95" height="47" fill="none" stroke="#f06a70" stroke-width="1"/>
              <rect x="60" y="134" width="147" height="12" fill="#f6f6f6"/>
            </svg>
          </article>

        </div>
      </div>
    </section>
  </div>
</div>
</body>
</html>
```

FILE: styles.css
```css
* { box-sizing: border-box; }
html, body { margin: 0; height: 970px; overflow: hidden; }
body { font-family: "Noto Sans", "Noto Sans CJK SC", sans-serif; color: #606266; background: #f0f0f1; }

/* browser chrome */
.browser { height: 42px; background: #383838; border-bottom: 1px solid #555; display: flex; align-items: flex-start; }
.nav-icons { width: 235px; height: 37px; padding-left: 23px; display: flex; align-items: center; gap: 31px; flex: none; }
.bi { width: 24px; height: 24px; flex: none; }
.address { flex: 1; height: 37px; background: #2b2b2b; border-radius: 0 0 8px 8px; display: flex; align-items: center; padding: 0 14px 2px 19px; }
.lock { width: 18px; height: 22px; flex: none; margin-right: 18px; }
.url { font-size: 17px; color: #9a9a9a; letter-spacing: -.28px; flex: 1; white-space: nowrap; }
.hi { color: #fff; }
.star-add { width: 24px; height: 22px; }
.ext { width: 143px; height: 37px; flex: none; display: flex; align-items: center; padding-left: 24px; }
.lastpass { width: 20px; height: 20px; background: #d32d27; border-radius: 2px; display: flex; align-items: center; justify-content: center; gap: 1.500px; }
.lastpass i { width: 3px; height: 3px; border-radius: 50%; background: #fff; }
.lastpass b { width: 1px; height: 8px; background: #fff; }
.divider { width: 2px; height: 20px; background: #5a5a5a; margin-left: 25px; }
.fav { width: 24px; height: 22px; margin-left: 25px; }

/* app header */
.topbar { height: 76px; background: #4c545c; display: flex; align-items: center; position: relative; }
.logo { width: 60px; height: 60px; margin-left: 25px; margin-top: 2px; flex: none; }
.brand { font-size: 41px; color: #f1f3f5; margin-left: 10px; line-height: 1; font-weight: 300; }
.gh-star { margin: 2px 0 0 35px; width: 69px; height: 25px; border: 1px solid #d5d5d5; border-radius: 3px; background: linear-gradient(#fcfcfc, #eeeeee); display: flex; align-items: center; padding-left: 5px; gap: 3px; font: bold 13px "Liberation Sans", sans-serif; color: #333; }
.octo { width: 18px; height: 18px; flex: none; }
.gh-count { margin: 2px 0 0 6px; width: 36px; height: 25px; border: 1px solid #d5d5d5; border-radius: 3px; background: #fff; display: flex; align-items: center; justify-content: center; font: bold 14px "Liberation Sans", sans-serif; color: #333; position: relative; }
.gh-count::before { content: ""; position: absolute; left: -5px; top: 7px; border: 5px solid transparent; border-left: 0; border-right-color: #fff; }

.main { display: flex; height: 852px; }

/* sidebar */
.sidebar { width: 73px; flex: none; background: #fff; padding-top: 26px; box-shadow: 2px 0 6px rgba(0,0,0,.08); display: flex; flex-direction: column; gap: 24px; }
.side-item { height: 73px; display: flex; flex-direction: column; align-items: center; justify-content: center; font-size: 16px; line-height: 22px; color: #606266; gap: 1px; border-left: 5px solid transparent; padding-right: 5px; }
.side-item.active { background: #f0f0f0; border-left-color: #4c545c; color: #4c4c4c; }
.side-item.help { gap: 4px; }
.side-icon { width: 32px; height: 32px; flex: none; }
.info-i { font: italic bold 24px "Liberation Serif", serif; fill: #fff; }

/* content */
.content { flex: 1; min-width: 0; padding: 25px 0 0 221px; }
.panel { height: 827px; background: #fff; padding: 25px 7px 11px 25px; box-shadow: 0 0 14px rgba(0,0,0,.12); display: flex; flex-direction: column; }
.info-row { height: 40px; display: flex; align-items: center; flex: none; margin-bottom: 23px; }
.lbl { font-size: 18px; color: #606266; white-space: nowrap; width: 88px; padding-bottom: 5px; }
.lbl.second { margin-left: 16px; width: 87px; }
.lbl.switch { margin-left: auto; width: 93px; }
.tag { height: 40px; padding: 0 13px 2px; display: flex; align-items: center; background: #ecf5ff; border: 1px solid #d9ecff; border-radius: 4px; color: #409eff; font-size: 15.600px; }
.select { width: 253px; height: 40px; border: 1px solid #dcdfe6; border-radius: 4px; display: flex; align-items: center; justify-content: space-between; padding: 2px 12px 0 19px; font: 16px "Liberation Sans", sans-serif; color: #606266; }
.chev { width: 14px; height: 8px; }

/* list */
.list { flex: 1; min-height: 0; border: 1px solid #dcdcdc; overflow: hidden; padding: 12px 0 0 13px; position: relative; }
.scroll-thumb { position: absolute; top: 0; right: 0; width: 6px; height: 459px; background: #bdbdbd; }
.grid { display: grid; grid-template-columns: repeat(4, 250px); gap: 25px; grid-auto-rows: 262.500px; }
.card { background: #fff; box-shadow: 4px 4px 6px rgba(0,0,0,.28); overflow: hidden; }
.thumb { display: block; width: 250px; height: 192px; filter: blur(.6px); }
.thumb text { font-family: "Liberation Sans", "Noto Sans CJK SC", sans-serif; white-space: pre; }
.f3 { font-size: 3.200px; }
.f4 { font-size: 4.200px; }
.f5 { font-size: 5.200px; }
.f6 { font-size: 6.300px; }
.f7 { font-size: 7.200px; }
.f8 { font-size: 8px; }
.f9 { font-size: 9.500px; }
.b { font-weight: bold; }
.name { height: 38px; line-height: 34px; padding: 0 5px 0 6px; font-size: 16.900px; color: #606266; white-space: nowrap; overflow: hidden; text-overflow: ellipsis; }
.actions { display: flex; justify-content: space-between; align-items: flex-start; padding: 3px 5px 0 8px; }
.trash { width: 16px; height: 18px; margin-top: 2px; }
.btns { display: flex; gap: 6px; }
.btn { height: 25px; min-width: 34px; padding: 0 3px; text-align: center; border: 1px solid #555; border-radius: 6px; font-size: 16px; line-height: 24px; color: #555; }
.btn:nth-child(2) { padding: 0 6px; }
```
